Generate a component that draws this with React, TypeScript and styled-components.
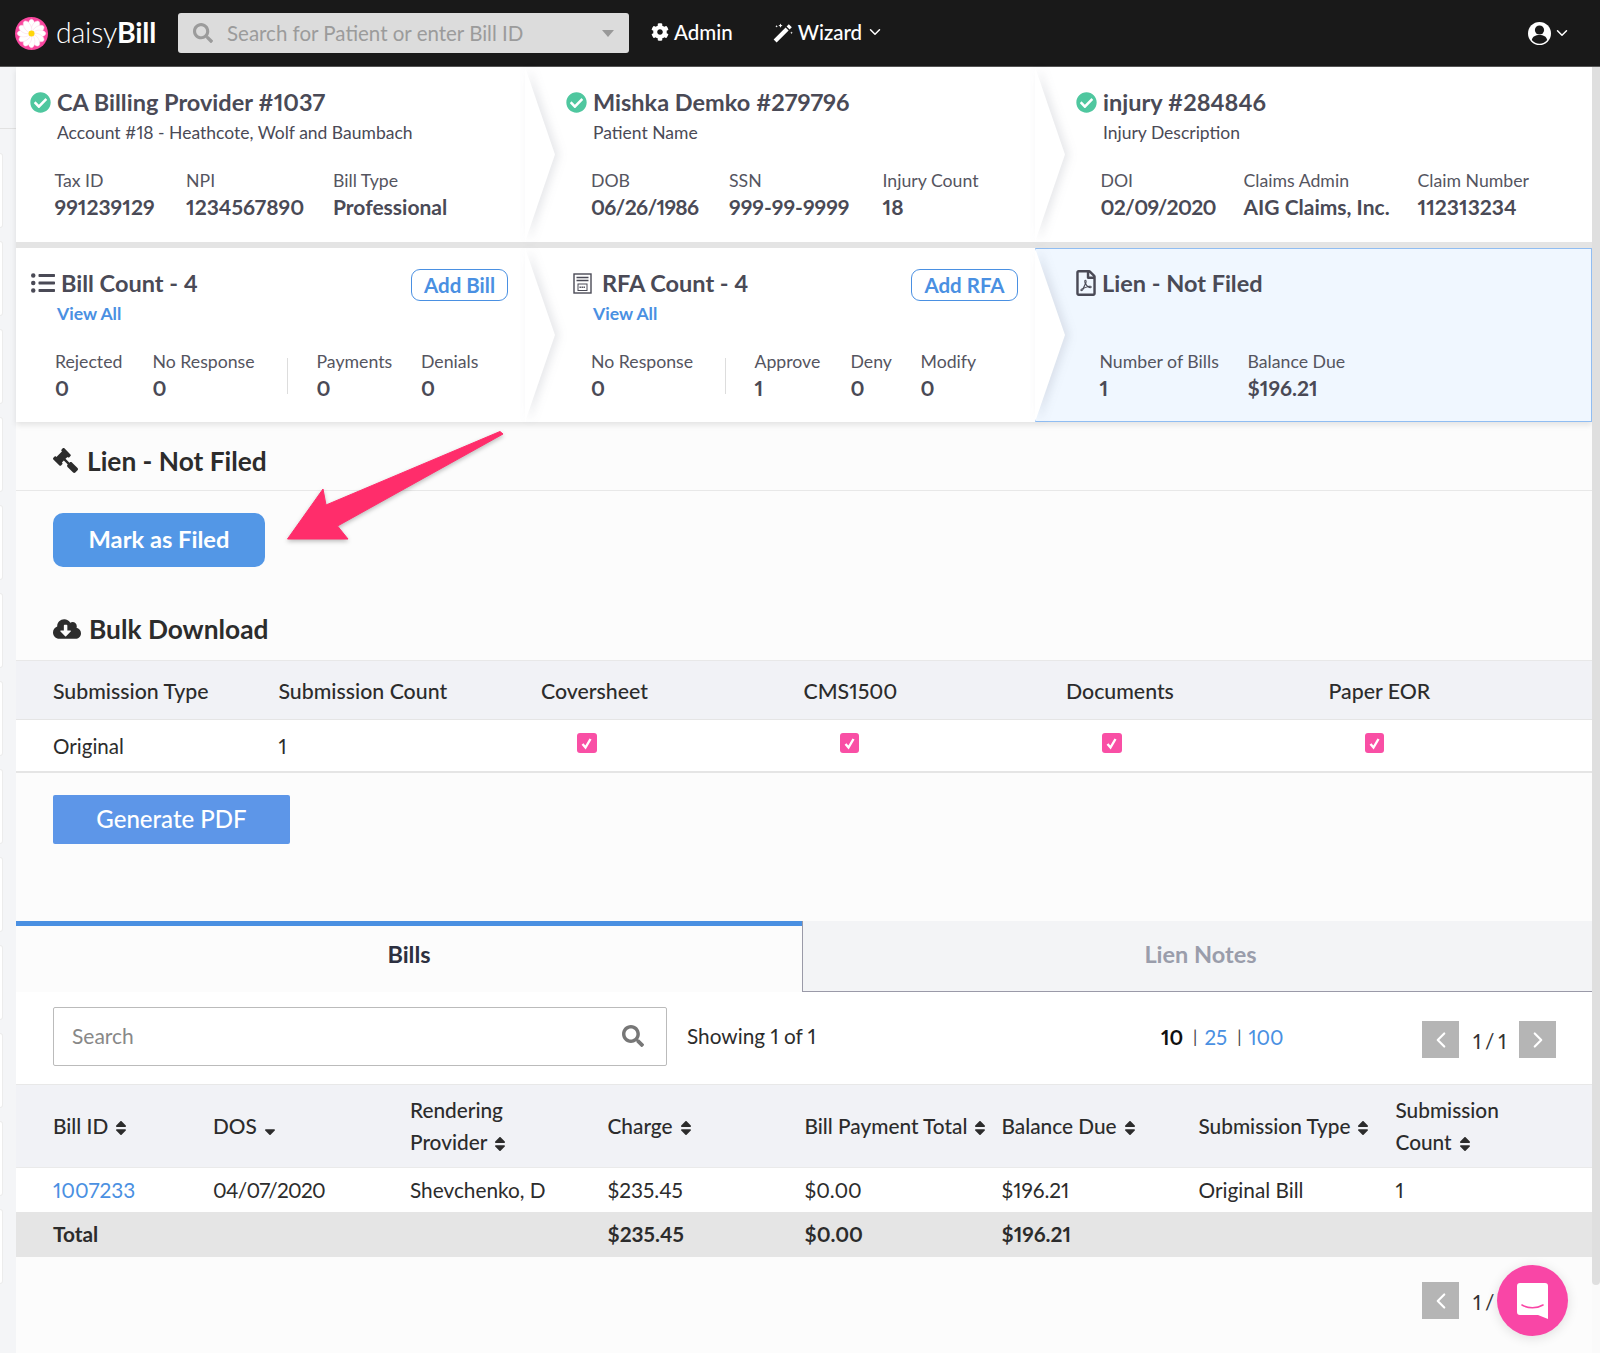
import type { ReactNode } from "react";
import styled, { createGlobalStyle } from "styled-components";
import {
  FaCheckCircle,
  FaCloudDownloadAlt,
  FaCog,
  FaGavel,
  FaListUl,
  FaRegFilePdf,
  FaSearch,
  FaSort,
  FaSortDown,
} from "react-icons/fa";
import { FiChevronDown, FiChevronLeft, FiChevronRight } from "react-icons/fi";

const FONT = `"Lato", "Open Sans", sans-serif`;

const GlobalStyle = createGlobalStyle`
  html, body {
    margin: 0;
    padding: 0;
    background: #fcfcfc;
    font-family: ${FONT};
    font-variant-numeric: proportional-nums;
    color: #4a4a56;
  }
  * { box-sizing: border-box; }
  button { font-variant-numeric: inherit; }
`;

const Page = styled.div`
  position: relative;
  width: 1600px;
  height: 1353px;
  overflow: hidden;
`;

const Navbar = styled.header`
  height: 67px;
  background: #191919;
  border-bottom: 1px solid #555;
  display: flex;
  align-items: center;
  color: #fff;
  padding: 0 29px 0 15px;
`;

const Logo = styled.div`
  display: flex;
  align-items: center;
  gap: 8px;
  width: 163px;
  font-size: 28.5px;
  font-weight: 300;
  letter-spacing: -0.2px;
  b { font-weight: 700; }
  span { margin-top: -3px; }
`;

const SearchBar = styled.div`
  width: 451px;
  height: 40px;
  background: #dcdcdc;
  border-radius: 3px;
  display: flex;
  align-items: center;
  padding: 0 15px;
  color: #9b9b9b;
  font-size: 20.5px;
  gap: 14px;
  svg { font-size: 20px; }
`;

const SearchCaret = styled.span`
  margin-left: auto;
  width: 0;
  height: 0;
  border-left: 6px solid transparent;
  border-right: 6px solid transparent;
  border-top: 7px solid #999;
`;

const NavItem = styled.div<{ $left: number; $gap: number }>`
  margin: -2px 0 0 ${(p) => p.$left}px;
  display: flex;
  align-items: center;
  gap: ${(p) => p.$gap}px;
  font-size: 20.5px;
  font-weight: 500;
  svg { flex-shrink: 0; }
`;

const UserMenu = styled.div`
  margin-left: auto;
  display: flex;
  align-items: center;
  gap: 2px;
`;

const Body = styled.div`
  display: flex;
  height: 1286px;
`;

const Rail = styled.aside`
  width: 16px;
  flex-shrink: 0;
  background: #f4f5f7;
  padding-top: 61px;
  display: flex;
  flex-direction: column;
  gap: 13.5px;
`;

const RailLine = styled.div`
  height: 1px;
  flex-shrink: 0;
  background: #e2e2e2;
  margin-bottom: 10.5px;
`;

const RailBlock = styled.div`
  width: 3px;
  height: 74.5px;
  flex-shrink: 0;
  background: #fff;
  border: 1px solid #ececec;
  border-left: none;
  border-radius: 0 3px 3px 0;
`;

const Main = styled.main`
  width: 1576px;
  flex-shrink: 0;
  background: #fcfcfc;
`;

const ScrollTrack = styled.div`
  width: 8px;
  flex-shrink: 0;
  background: #fafafa;
`;

const ScrollThumb = styled.div`
  height: 1218px;
  background: #dfdfdf;
  border-radius: 0 0 4px 4px;
`;

const Summary = styled.div`
  display: flex;
  flex-direction: column;
  gap: 6px;
  background: #e4e4e4;
  box-shadow: 0 3px 6px rgba(0, 0, 0, 0.1);
`;

const SummaryRow = styled.section<{ $height: number }>`
  display: flex;
  height: ${(p) => p.$height}px;
`;

const Cell = styled.div<{ $width: number; $pad: number; $active?: boolean }>`
  position: relative;
  width: ${(p) => p.$width}px;
  flex-shrink: 0;
  padding-left: ${(p) => p.$pad}px;
  background: ${(p) => (p.$active ? "#f0f7ff" : "#fff")};
  border: ${(p) => (p.$active ? "1px solid #90bdf2" : "none")};
`;

const Chevron = styled.div`
  position: absolute;
  left: 100%;
  top: 0;
  width: 30px;
  height: 100%;
  z-index: 2;
  filter: drop-shadow(4px 0 5px rgba(60, 70, 90, 0.13));
  &::before {
    content: "";
    display: block;
    width: 100%;
    height: 100%;
    background: #fff;
    clip-path: polygon(0 0, 100% 50%, 0 100%);
  }
`;

const TitleLine = styled.div<{ $top: number; $gap?: number }>`
  display: flex;
  align-items: center;
  gap: ${(p) => p.$gap ?? 6}px;
  height: 30px;
  margin-top: ${(p) => p.$top}px;
  font-size: 23.5px;
  font-weight: 700;
  color: #4a4a56;
  white-space: nowrap;
`;

const RfaTitle = styled.span`
  margin-left: 4px;
`;

const CheckIcon = styled(FaCheckCircle)`
  color: #4fc79f;
  font-size: 21px;
  flex-shrink: 0;
`;

const Sub = styled.div<{ $indent: number }>`
  margin: 4px 0 0 ${(p) => p.$indent}px;
  height: 24px;
  line-height: 24px;
  font-size: 17.5px;
  color: #4a4a56;
  white-space: nowrap;
`;

const ViewAll = styled.a<{ $indent: number }>`
  display: block;
  margin: 4px 0 0 ${(p) => p.$indent}px;
  height: 24px;
  line-height: 24px;
  font-size: 17.6px;
  font-weight: 700;
  color: #4a90e2;
`;

const Stats = styled.div<{ $indent: number; $top: number }>`
  display: flex;
  margin: ${(p) => p.$top}px 0 0 ${(p) => p.$indent}px;
`;

const Stat = styled.div<{ $width: number }>`
  width: ${(p) => p.$width}px;
  flex-shrink: 0;
  white-space: nowrap;
`;

const StatLabel = styled.div`
  height: 24px;
  line-height: 24px;
  font-size: 17.7px;
  color: #55555f;
`;

const StatValue = styled.div`
  height: 30px;
  line-height: 30px;
  margin-top: -1px;
  font-size: 21px;
  font-weight: 700;
  color: #4a4a56;
`;

const Tight = styled.span`
  letter-spacing: -0.7px;
`;

const StatDivider = styled.div<{ $right: number }>`
  width: 1px;
  height: 36px;
  margin: 8px ${(p) => p.$right}px 0 0;
  background: #ddd;
  flex-shrink: 0;
`;

const AddButton = styled.a<{ $right: number; $width: number }>`
  position: absolute;
  top: 21px;
  right: ${(p) => p.$right}px;
  width: ${(p) => p.$width}px;
  height: 32px;
  display: flex;
  align-items: center;
  justify-content: center;
  background: #fff;
  border: 1px solid #4a90e2;
  border-radius: 9px;
  color: #4a90e2;
  font-size: 20.5px;
  font-weight: 700;
`;

const SectionHead = styled.h2<{ $height: number; $border?: boolean; $pad: number; $gap: number }>`
  margin: 0;
  height: ${(p) => p.$height}px;
  padding: ${(p) => p.$pad}px 0 0 37px;
  display: flex;
  align-items: center;
  gap: ${(p) => p.$gap}px;
  font-size: 26.3px;
  font-weight: 700;
  color: #2c2c2c;
  border-bottom: ${(p) => (p.$border ? "1px solid #e8e8e8" : "none")};
`;

const GavelIcon = styled(FaGavel)`
  transform: scaleX(-1);
`;

const PrimaryButton = styled.button`
  display: block;
  margin: 22px 0 0 37px;
  padding: 0 0 2px;
  width: 212px;
  height: 54px;
  background: #5397e6;
  border: none;
  border-radius: 10px;
  color: #fff;
  font-family: ${FONT};
  font-size: 23.7px;
  font-weight: 700;
`;

const SubmitGrid = styled.div`
  display: grid;
  grid-template-columns: 225.5px repeat(4, 262.5px) 1fr;
`;

const SubmitHead = styled(SubmitGrid)`
  height: 60px;
  padding-top: 1px;
  background: #f1f2f6;
  border-top: 1px solid #e8e8e8;
  border-bottom: 1px solid #e5e5e5;
  align-items: center;
`;

const SubmitRow = styled(SubmitGrid)`
  height: 53px;
  background: #fff;
  border-bottom: 2px solid #e5e5e5;
  align-items: center;
`;

const HeadCell = styled.div`
  padding-left: 37px;
  font-size: 21.3px;
  font-weight: 500;
  color: #2c2c2c;
`;

const BodyCell = styled.div`
  padding-left: 37px;
  font-size: 20.6px;
  color: #2c2c2c;
  white-space: nowrap;
`;

const CheckBox = styled.span`
  display: flex;
  align-items: center;
  justify-content: center;
  width: 19.5px;
  height: 19.5px;
  margin: -5px 0 0 36px;
  background: #f94fa5;
  border-radius: 3px;
`;

const GenerateButton = styled.button`
  display: block;
  margin: 22px 0 0 37px;
  padding: 0 0 2px;
  width: 237px;
  height: 49px;
  background: #5d96e8;
  border: none;
  border-radius: 2px;
  color: #fff;
  font-family: ${FONT};
  font-size: 24px;
  font-weight: 500;
`;

const Tabs = styled.div`
  display: flex;
  margin-top: 77px;
  height: 71px;
`;

const Tab = styled.div<{ $active?: boolean }>`
  display: flex;
  align-items: center;
  justify-content: center;
  font-size: 23.5px;
  font-weight: 700;
  ${(p) =>
    p.$active
      ? `width: 786px; padding-bottom: 10px; border-top: 5px solid #4a90e2; color: #2c3040; background: #fcfcfc;`
      : `flex: 1; padding: 0 0 4px 6px; color: #9a9dab; background: #f3f4f6; border-left: 1px solid #9a9aa8; border-bottom: 1px solid #9a9aa8;`}
`;

const Toolbar = styled.div`
  height: 92px;
  background: #fff;
  display: flex;
  align-items: center;
  padding-left: 37px;
  font-size: 20.8px;
  color: #2c2c2c;
`;

const SearchField = styled.div`
  width: 614px;
  height: 59px;
  margin-top: -4px;
  border: 1px solid #bbb;
  border-radius: 2px;
  display: flex;
  align-items: center;
  justify-content: space-between;
  padding: 0 22px 2px 18px;
  color: #888;
  font-size: 21px;
  svg { color: #777; font-size: 22px; margin-top: 2px; }
`;

const Showing = styled.div`
  margin: -5px 0 0 20px;
  width: 474px;
`;

const PageSizes = styled.div`
  display: flex;
  align-items: center;
  margin-top: -3px;
  width: 261px;
  font-size: 20.5px;
  color: #4a90e2;
  b { color: #111; font-weight: 700; }
  i { font-style: normal; color: #444; font-size: 17px; margin: 0 7px 0 10px; }
`;

const Pager = styled.div<{ $top?: number }>`
  display: flex;
  align-items: center;
  margin-top: ${(p) => p.$top ?? 3}px;
  font-size: 20.8px;
  color: #333;
`;

const PageButton = styled.span`
  width: 37px;
  height: 37px;
  background: #b5b5b5;
  color: #fff;
  display: flex;
  align-items: center;
  justify-content: center;
  font-size: 26px;
`;

const PageCount = styled.span`
  width: 60px;
  padding-left: 14px;
  padding-top: 2px;
  word-spacing: -1.5px;
  white-space: nowrap;
`;

const BillGrid = styled.div`
  display: grid;
  grid-template-columns: 160px 197px 197.5px 197px 197px 197px 197px 1fr;
`;

const BillHead = styled(BillGrid)`
  height: 84px;
  padding-bottom: 1px;
  background: #f1f2f6;
  border-top: 1px solid #e8e8e8;
  border-bottom: 1px solid #eaeaea;
  align-items: center;
`;

const BillRow = styled(BillGrid)<{ $total?: boolean }>`
  height: ${(p) => (p.$total ? 45 : 44)}px;
  padding-bottom: 2px;
  align-items: center;
  background: ${(p) => (p.$total ? "#e5e5e5" : "#fff")};
`;

const BillHeadCell = styled.div`
  padding-left: 37px;
  font-size: 20.8px;
  font-weight: 500;
  line-height: 31.5px;
  color: #2c2c2c;
  white-space: nowrap;
  svg { font-size: 18px; vertical-align: -3px; margin-left: 4px; }
`;

const BillCell = styled.div<{ $total?: boolean }>`
  padding-left: 37px;
  font-size: 20.8px;
  font-weight: ${(p) => (p.$total ? 700 : 400)};
  color: #2c2c2c;
  white-space: nowrap;
  a { color: #4a90e2; }
`;

const FooterPager = styled.div`
  display: flex;
  justify-content: flex-end;
  padding: 25px 36px 0 0;
`;

const ChatBubble = styled.div`
  position: absolute;
  left: 1497px;
  top: 1265px;
  width: 71px;
  height: 71px;
  border-radius: 50%;
  background: #f946a6;
  box-shadow: 0 2px 12px rgba(0, 0, 0, 0.12);
  display: flex;
  align-items: center;
  justify-content: center;
`;

const ArrowOverlay = styled.svg`
  position: absolute;
  left: 280px;
  top: 425px;
  overflow: visible;
  filter: drop-shadow(0 2px 2px rgba(0, 0, 0, 0.25));
`;

function Daisy() {
  const petals = Array.from({ length: 12 }, (_, i) => i * 30);
  return (
    <svg width="33" height="33" viewBox="0 0 33 33">
      <circle cx="16.5" cy="16.5" r="16.5" fill="#f9479f" />
      {petals.map((a) => (
        <ellipse key={a} cx="16.5" cy="8.5" rx="3.4" ry="6.2" fill="#fff" stroke="#fbd5e6" strokeWidth="0.5" transform={`rotate(${a} 16.5 16.5)`} />
      ))}
      <circle cx="16.5" cy="16.5" r="3" fill="#ffd60a" />
    </svg>
  );
}

function WandIcon() {
  return (
    <svg width="21" height="21" viewBox="0 0 21 21" fill="#fff">
      <path d="M.6 17.4 12.6 5.4l3 3L3.6 20.4z" />
      <path d="M13.6 4.4l2.2-2.2 3 3-2.2 2.2z" />
      <path d="M7.5 1.5l.7 1.4 1.4.7-1.4.7-.7 1.4-.7-1.4-1.4-.7 1.4-.7zM3.6 3l.4.9.9.4-.9.4-.4.9-.4-.9-.9-.4.9-.4zM18.5 9.5l.4.9.9.4-.9.4-.4.9-.4-.9-.9-.4.9-.4z" />
    </svg>
  );
}

function UserIcon() {
  return (
    <svg width="23" height="23" viewBox="0 0 23 23">
      <circle cx="11.5" cy="11.5" r="11.5" fill="#fff" />
      <circle cx="11.5" cy="8" r="4.6" fill="#191919" />
      <path d="M3.8 18c.8-3.6 3.6-5 7.7-5s6.9 1.4 7.7 5a9.6 9.6 0 0 1-15.4 0z" fill="#191919" />
    </svg>
  );
}

function RfaIcon() {
  return (
    <svg width="19" height="21" viewBox="0 0 19 21" fill="none" stroke="#4a4a56">
      <rect x="1" y="1" width="17" height="19" strokeWidth="1.4" />
      <path d="M3.5 4.5h12M3.5 7.5h12" strokeWidth="1.4" />
      <rect x="5" y="11" width="9" height="6.5" strokeWidth="1" />
      <path d="M6.5 14.2h6" strokeWidth="1.6" strokeDasharray="1.4 .6" />
    </svg>
  );
}

function ChatIcon() {
  return (
    <svg width="31" height="36" viewBox="0 0 31 36">
      <path d="M3 0h25a3 3 0 0 1 3 3v33l-10-4H3a3 3 0 0 1-3-3V3a3 3 0 0 1 3-3z" fill="#fff" />
      <path d="M5 22c6 3.6 15 3.6 21 0" fill="none" stroke="#f946a6" strokeWidth="1.6" strokeLinecap="round" />
    </svg>
  );
}

interface StatData {
  label: string;
  value: ReactNode;
  width: number;
}

function StatList({ items }: { items: StatData[] }) {
  return (
    <>
      {items.map((s) => (
        <Stat key={s.label} $width={s.width}>
          <StatLabel>{s.label}</StatLabel>
          <StatValue>{s.value}</StatValue>
        </Stat>
      ))}
    </>
  );
}

function PageNav() {
  return (
    <>
      <PageButton>
        <FiChevronLeft />
      </PageButton>
      <PageCount>1 / 1</PageCount>
      <PageButton>
        <FiChevronRight />
      </PageButton>
    </>
  );
}

function App() {
  return (
    <Page>
      <GlobalStyle />
      <Navbar>
        <Logo>
          <Daisy />
          <span>
            daisy<b>Bill</b>
          </span>
        </Logo>
        <SearchBar>
          <FaSearch />
          <span>Search for Patient or enter Bill ID</span>
          <SearchCaret />
        </SearchBar>
        <NavItem $left={22} $gap={5}>
          <FaCog size={18} />
          Admin
        </NavItem>
        <NavItem $left={40} $gap={4}>
          <WandIcon />
          Wizard
          <FiChevronDown size={18} />
        </NavItem>
        <UserMenu>
          <UserIcon />
          <FiChevronDown size={18} />
        </UserMenu>
      </Navbar>
      <Body>
        <Rail>
          <RailLine />
          {Array.from({ length: 13 }, (_, i) => (
            <RailBlock key={i} />
          ))}
        </Rail>
        <Main>
          <Summary>
            <SummaryRow $height={175}>
              <Cell $width={509} $pad={14}>
                <TitleLine $top={20}>
                  <CheckIcon />
                  CA Billing Provider #1037
                </TitleLine>
                <Sub $indent={27}>Account #18 - Heathcote, Wolf and Baumbach</Sub>
                <Stats $indent={24.5} $top={24}>
                  <StatList
                    items={[
                      { label: "Tax ID", value: "991239129", width: 131.5 },
                      { label: "NPI", value: "1234567890", width: 147 },
                      { label: "Bill Type", value: "Professional", width: 150 },
                    ]}
                  />
                </Stats>
                <Chevron />
              </Cell>
              <Cell $width={510} $pad={41}>
                <TitleLine $top={20}>
                  <CheckIcon />
                  Mishka Demko #279796
                </TitleLine>
                <Sub $indent={27}>Patient Name</Sub>
                <Stats $indent={25} $top={24}>
                  <StatList
                    items={[
                      { label: "DOB", value: <Tight>06/26/1986</Tight>, width: 138 },
                      { label: "SSN", value: "999-99-9999", width: 153.5 },
                      { label: "Injury Count", value: "18", width: 110 },
                    ]}
                  />
                </Stats>
                <Chevron />
              </Cell>
              <Cell $width={557} $pad={41}>
                <TitleLine $top={20}>
                  <CheckIcon />
                  injury #284846
                </TitleLine>
                <Sub $indent={27}>Injury Description</Sub>
                <Stats $indent={24.5} $top={24}>
                  <StatList
                    items={[
                      { label: "DOI", value: <Tight>02/09/2020</Tight>, width: 143 },
                      { label: "Claims Admin", value: "AIG Claims, Inc.", width: 174 },
                      { label: "Claim Number", value: "112313234", width: 130 },
                    ]}
                  />
                </Stats>
              </Cell>
            </SummaryRow>
            <SummaryRow $height={174}>
              <Cell $width={509} $pad={15}>
                <TitleLine $top={20}>
                  <FaListUl size={24} color="#4a4a56" />
                  Bill Count - 4
                </TitleLine>
                <ViewAll $indent={26}>View All</ViewAll>
                <Stats $indent={24} $top={24}>
                  <StatList
                    items={[
                      { label: "Rejected", value: "0", width: 97.5 },
                      { label: "No Response", value: "0", width: 134 },
                    ]}
                  />
                  <StatDivider $right={29} />
                  <StatList
                    items={[
                      { label: "Payments", value: "0", width: 104.5 },
                      { label: "Denials", value: "0", width: 70 },
                    ]}
                  />
                </Stats>
                <AddButton $right={17} $width={97}>
                  Add Bill
                </AddButton>
                <Chevron />
              </Cell>
              <Cell $width={510} $pad={48}>
                <TitleLine $top={20}>
                  <RfaIcon />
                  <RfaTitle>RFA Count - 4</RfaTitle>
                </TitleLine>
                <ViewAll $indent={20}>View All</ViewAll>
                <Stats $indent={18} $top={24}>
                  <StatList items={[{ label: "No Response", value: "0", width: 133.5 }]} />
                  <StatDivider $right={29} />
                  <StatList
                    items={[
                      { label: "Approve", value: "1", width: 96 },
                      { label: "Deny", value: "0", width: 70 },
                      { label: "Modify", value: "0", width: 70 },
                    ]}
                  />
                </Stats>
                <AddButton $right={17} $width={107}>
                  Add RFA
                </AddButton>
                <Chevron />
              </Cell>
              <Cell $width={557} $pad={37} $active>
                <TitleLine $top={19} $gap={3}>
                  <FaRegFilePdf size={26} color="#4a4a56" />
                  Lien - Not Filed
                </TitleLine>
                <Stats $indent={26.5} $top={52}>
                  <StatList
                    items={[
                      { label: "Number of Bills", value: "1", width: 148 },
                      { label: "Balance Due", value: "$196.21", width: 130 },
                    ]}
                  />
                </Stats>
              </Cell>
            </SummaryRow>
          </Summary>
          <SectionHead $height={69} $pad={9} $gap={9} $border>
            <GavelIcon size={25} />
            Lien - Not Filed
          </SectionHead>
          <PrimaryButton>Mark as Filed</PrimaryButton>
          <SectionHead $height={93} $pad={31} $gap={8}>
            <FaCloudDownloadAlt size={28} />
            Bulk Download
          </SectionHead>
          <SubmitHead>
            <HeadCell>Submission Type</HeadCell>
            <HeadCell>Submission Count</HeadCell>
            <HeadCell>Coversheet</HeadCell>
            <HeadCell>CMS1500</HeadCell>
            <HeadCell>Documents</HeadCell>
            <HeadCell>Paper EOR</HeadCell>
          </SubmitHead>
          <SubmitRow>
            <BodyCell>Original</BodyCell>
            <BodyCell>1</BodyCell>
            {[0, 1, 2, 3].map((i) => (
              <BodyCell key={i}>
                <CheckBox>
                  <svg width="13" height="13" viewBox="0 0 13 13">
                    <path d="M2.5 7l3 3.5L10.5 2" fill="none" stroke="#fff" strokeWidth="2.4" />
                  </svg>
                </CheckBox>
              </BodyCell>
            ))}
          </SubmitRow>
          <GenerateButton>Generate PDF</GenerateButton>
          <Tabs>
            <Tab $active>Bills</Tab>
            <Tab>Lien Notes</Tab>
          </Tabs>
          <Toolbar>
            <SearchField>
              Search
              <FaSearch />
            </SearchField>
            <Showing>Showing 1 of 1</Showing>
            <PageSizes>
              <b>10</b>
              <i>|</i>25<i>|</i>100
            </PageSizes>
            <Pager>
              <PageNav />
            </Pager>
          </Toolbar>
          <BillHead>
            <BillHeadCell>
              Bill ID
              <FaSort />
            </BillHeadCell>
            <BillHeadCell>
              DOS
              <FaSortDown />
            </BillHeadCell>
            <BillHeadCell>
              Rendering
              <br />
              Provider
              <FaSort />
            </BillHeadCell>
            <BillHeadCell>
              Charge
              <FaSort />
            </BillHeadCell>
            <BillHeadCell>
              Bill Payment Total
              <FaSort />
            </BillHeadCell>
            <BillHeadCell>
              Balance Due
              <FaSort />
            </BillHeadCell>
            <BillHeadCell>
              Submission Type
              <FaSort />
            </BillHeadCell>
            <BillHeadCell>
              Submission
              <br />
              Count
              <FaSort />
            </BillHeadCell>
          </BillHead>
          <BillRow>
            <BillCell>
              <a>1007233</a>
            </BillCell>
            <BillCell>
              <Tight>04/07/2020</Tight>
            </BillCell>
            <BillCell>Shevchenko, D</BillCell>
            <BillCell>$235.45</BillCell>
            <BillCell>$0.00</BillCell>
            <BillCell>$196.21</BillCell>
            <BillCell>Original Bill</BillCell>
            <BillCell>1</BillCell>
          </BillRow>
          <BillRow $total>
            <BillCell $total>Total</BillCell>
            <BillCell />
            <BillCell />
            <BillCell $total>$235.45</BillCell>
            <BillCell $total>$0.00</BillCell>
            <BillCell $total>$196.21</BillCell>
            <BillCell />
            <BillCell />
          </BillRow>
          <FooterPager>
            <Pager $top={0}>
              <PageNav />
            </Pager>
          </FooterPager>
        </Main>
        <ScrollTrack>
          <ScrollThumb />
        </ScrollTrack>
      </Body>
      <ArrowOverlay width="225" height="120" viewBox="280 425 225 120">
        <path d="M500 431.5 L503 434 L337.5 526 L348 539 L287.5 539 L323 489 L326 505 Z" fill="#ff2d6b" stroke="#ff2d6b" strokeWidth="1" strokeLinejoin="round" />
      </ArrowOverlay>
      <ChatBubble>
        <ChatIcon />
      </ChatBubble>
    </Page>
  );
}

export default App;
